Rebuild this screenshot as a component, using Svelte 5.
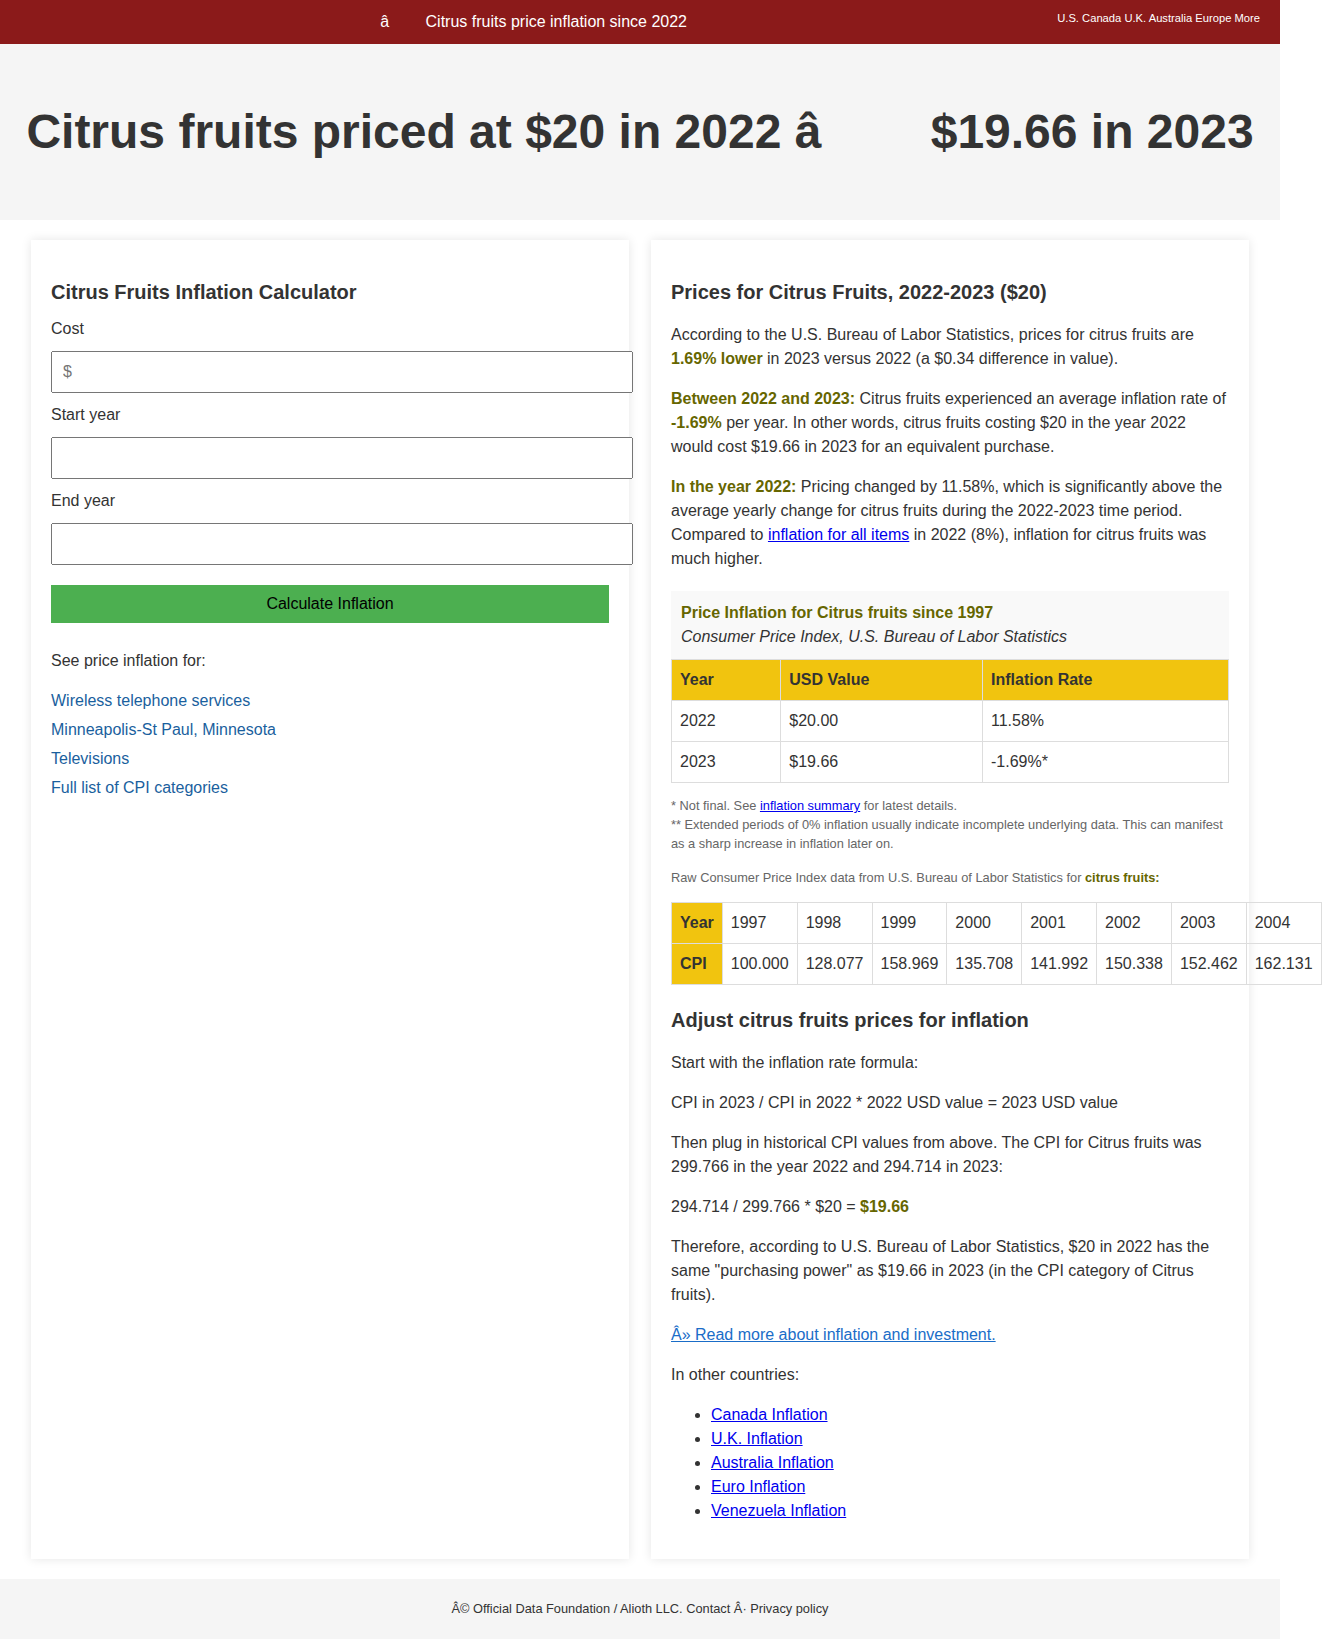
<script>
  const regions = ['U.S.', 'Canada', 'U.K.', 'Australia', 'Europe', 'More'];

  const related = [
    'Wireless telephone services',
    'Minneapolis-St Paul, Minnesota',
    'Televisions',
    'Full list of CPI categories'
  ];

  const rates = [
    { year: '2022', value: '$20.00', rate: '11.58%' },
    { year: '2023', value: '$19.66', rate: '-1.69%*' }
  ];

  const cpi = [
    { year: '1997', value: '100.000' },
    { year: '1998', value: '128.077' },
    { year: '1999', value: '158.969' },
    { year: '2000', value: '135.708' },
    { year: '2001', value: '141.992' },
    { year: '2002', value: '150.338' },
    { year: '2003', value: '152.462' },
    { year: '2004', value: '162.131' }
  ];

  const countries = ['Canada', 'U.K.', 'Australia', 'Euro', 'Venezuela'];
</script>

<div class="page">
  <header class="topbar">
    <a class="site" href="#top"><span class="arrow">â</span> Citrus fruits price inflation since 2022</a>
    <nav class="regions">
      {#each regions as region}
        <a href="#region">{region}</a>{' '}
      {/each}
    </nav>
  </header>

  <section class="hero">
    <h1>Citrus fruits priced at $20 in 2022 <span class="arrow">â</span> $19.66 in 2023</h1>
  </section>

  <main class="columns">
    <section class="card">
      <h2 class="form-title">Citrus Fruits Inflation Calculator</h2>
      <form onsubmit={(e) => e.preventDefault()}>
        <label for="cost">Cost</label>
        <input id="cost" type="text" placeholder="$" />
        <label for="start">Start year</label>
        <input id="start" type="text" />
        <label for="end">End year</label>
        <input id="end" type="text" />
        <button type="submit">Calculate Inflation</button>
      </form>
      <p>See price inflation for:</p>
      <ul class="related">
        {#each related as item}
          <li><a href="#related">{item}</a></li>
        {/each}
      </ul>
    </section>

    <section class="card">
      <h2>Prices for Citrus Fruits, 2022-2023 ($20)</h2>
      <p>According to the U.S. Bureau of Labor Statistics, prices for citrus fruits are <strong>1.69% lower</strong> in 2023 versus 2022 (a $0.34 difference in value).</p>
      <p><strong>Between 2022 and 2023:</strong> Citrus fruits experienced an average inflation rate of <strong>-1.69%</strong> per year. In other words, citrus fruits costing $20 in the year 2022 would cost $19.66 in 2023 for an equivalent purchase.</p>
      <p><strong>In the year 2022:</strong> Pricing changed by 11.58%, which is significantly above the average yearly change for citrus fruits during the 2022-2023 time period. Compared to <a href="#all-items">inflation for all items</a> in 2022 (8%), inflation for citrus fruits was much higher.</p>

      <table class="rates">
        <caption>
          <strong>Price Inflation for Citrus fruits since 1997</strong><br />
          <em>Consumer Price Index, U.S. Bureau of Labor Statistics</em>
        </caption>
        <thead>
          <tr><th>Year</th><th>USD Value</th><th>Inflation Rate</th></tr>
        </thead>
        <tbody>
          {#each rates as row}
            <tr><td>{row.year}</td><td>{row.value}</td><td>{row.rate}</td></tr>
          {/each}
        </tbody>
      </table>

      <div class="notes">
        <p>* Not final. See <a href="#summary">inflation summary</a> for latest details.<br />** Extended periods of 0% inflation usually indicate incomplete underlying data. This can manifest as a sharp increase in inflation later on.</p>
        <p>Raw Consumer Price Index data from U.S. Bureau of Labor Statistics for <strong>citrus fruits:</strong></p>
      </div>

      <table class="cpi">
        <tbody>
          <tr>
            <th>Year</th>
            {#each cpi as entry}<td>{entry.year}</td>{/each}
          </tr>
          <tr>
            <th>CPI</th>
            {#each cpi as entry}<td>{entry.value}</td>{/each}
          </tr>
        </tbody>
      </table>

      <h2>Adjust citrus fruits prices for inflation</h2>
      <p>Start with the inflation rate formula:</p>
      <p>CPI in 2023 / CPI in 2022 * 2022 USD value = 2023 USD value</p>
      <p>Then plug in historical CPI values from above. The CPI for Citrus fruits was 299.766 in the year 2022 and 294.714 in 2023:</p>
      <p>294.714 / 299.766 * $20 = <strong>$19.66</strong></p>
      <p>Therefore, according to U.S. Bureau of Labor Statistics, $20 in 2022 has the same "purchasing power" as $19.66 in 2023 (in the CPI category of Citrus fruits).</p>
      <p><a class="more" href="#more">Â» Read more about inflation and investment.</a></p>
      <p>In other countries:</p>
      <ul>
        {#each countries as country}
          <li><a href="#country">{country} Inflation</a></li>
        {/each}
      </ul>
    </section>
  </main>

  <footer>
    Â© Official Data Foundation / Alioth LLC. <a href="#contact">Contact</a> Â· <a href="#privacy">Privacy policy</a>
  </footer>
</div>

<style>
  :global(body) {
    margin: 0;
    background: #fff;
  }

  .page {
    margin-right: 42px;
    font: 16px/24px "Liberation Sans", Arial, sans-serif;
    color: #333;
  }

  .topbar {
    display: flex;
    gap: 10px;
    padding: 10px 20px;
    background: #8b1a1a;
  }

  .site {
    flex: 1;
    text-align: center;
    color: #fff;
    text-decoration: none;
  }

  .arrow {
    margin-right: 2em;
  }

  .regions {
    font-size: 70%;
    line-height: 17px;
  }

  .regions a {
    color: #fff;
    text-decoration: none;
  }

  .hero {
    padding: 20px;
    background: #f5f5f5;
    text-align: center;
  }

  h1 {
    margin: 32px 0;
    font-size: 48px;
    line-height: 72px;
  }

  .columns {
    display: flex;
    justify-content: space-around;
    padding: 20px;
  }

  .card {
    width: 45%;
    padding: 20px;
    background: #fff;
    box-shadow: 0 0 10px rgba(0, 0, 0, 0.1);
  }

  h2 {
    margin: 17px 0 16px;
    font-size: 20px;
    line-height: 30px;
  }

  .form-title {
    margin-bottom: 10px;
  }

  p,
  ul {
    margin: 16px 0;
  }

  strong {
    color: #660;
  }

  form {
    margin-bottom: 26px;
  }

  label {
    display: block;
  }

  input {
    display: block;
    box-sizing: content-box;
    width: 100%;
    margin: 10px 0;
    padding: 10px;
    font: 16px "Liberation Sans", Arial, sans-serif;
  }

  button {
    display: block;
    width: 100%;
    margin-top: 20px;
    padding: 10px;
    border: 0;
    background: #4caf50;
    color: #000;
    font: 16px "Liberation Sans", Arial, sans-serif;
  }

  .related {
    padding: 0;
    list-style: none;
  }

  .related li {
    margin-bottom: 5px;
  }

  .related a {
    color: #1a5f9e;
    text-decoration: none;
  }

  table {
    border-collapse: collapse;
  }

  .rates {
    width: 100%;
    margin-top: 20px;
  }

  caption {
    padding: 10px;
    background: #f9f9f9;
    text-align: left;
  }

  th,
  td {
    padding: 8px;
    border: 1px solid #ddd;
    text-align: left;
  }

  th {
    background: #f1c40f;
  }

  .cpi {
    margin-bottom: 20px;
  }

  .notes {
    font-size: 80%;
    line-height: 19px;
    color: #666;
  }

  .notes p {
    margin: 13px 0 15px;
  }

  .more {
    color: #1a6dc8;
  }

  footer {
    padding: 20px;
    background: #f5f5f5;
    text-align: center;
    font-size: 80%;
    line-height: 20px;
  }

  footer a {
    color: inherit;
    text-decoration: none;
  }
</style>
